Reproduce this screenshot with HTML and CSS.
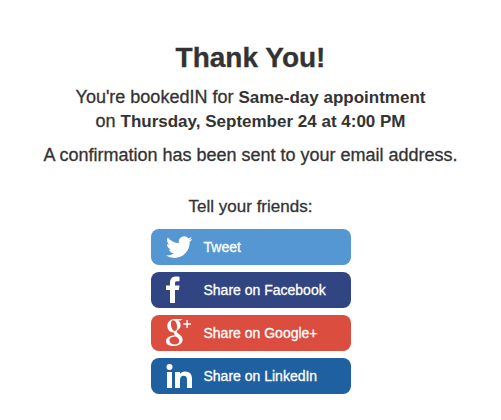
FILE: index.html
```html
<!DOCTYPE html>
<html lang="en">
<head>
    <meta charset="utf-8">
    <meta name="viewport" content="width=device-width, initial-scale=1">
    <title>Thank You!</title>
    <link rel="stylesheet" href="styles.css">
</head>
<body>
    <main class="confirmation">
        <h1>Thank You!</h1>
        <p>You're bookedIN for <strong>Same-day appointment</strong><br>
        on <strong>Thursday, September 24 at 4:00 PM</strong></p>
        <p>A confirmation has been sent to your email address.</p>

        <section class="share">
            <h2>Tell your friends:</h2>
            <a href="#" class="share-button twitter">
                <svg viewBox="0 0 28 28" aria-hidden="true">
                    <path transform="translate(0 1) scale(1.1)" d="M23.953 4.57a10 10 0 01-2.825.775 4.958 4.958 0 002.163-2.723c-.951.555-2.005.959-3.127 1.184a4.92 4.92 0 00-8.384 4.482C7.69 8.095 4.067 6.13 1.64 3.162a4.822 4.822 0 00-.666 2.475c0 1.71.87 3.213 2.188 4.096a4.904 4.904 0 01-2.228-.616v.06a4.923 4.923 0 003.946 4.827 4.996 4.996 0 01-2.212.085 4.936 4.936 0 004.604 3.417 9.867 9.867 0 01-6.102 2.105c-.39 0-.779-.023-1.17-.067a13.995 13.995 0 007.557 2.209c9.053 0 13.998-7.496 13.998-13.985 0-.21 0-.42-.015-.63A9.935 9.935 0 0024 4.59z"/>
                </svg>
                <span>Tweet</span>
            </a>
            <a href="#" class="share-button facebook">
                <svg viewBox="0 0 28 28" aria-hidden="true">
                    <path d="M4 27V14H0V9.500H4V7C4 2.500 6.300 0.500 10 0.500C11.700 0.500 13 0.600 13.500 0.700V5.200H11C9.300 5.200 9 6 9 7.200V9.500H13.500L12.900 14H9V27Z"/>
                </svg>
                <span>Share on Facebook</span>
            </a>
            <a href="#" class="share-button google">
                <svg viewBox="0 0 28 28" aria-hidden="true">
                    <path fill-rule="evenodd" d="M8.500 0H16.500L14.500 1.600H12C13.600 2.600 14.600 4 14.600 6.200C14.600 8.400 13.400 9.700 12 10.900C11 11.700 10.700 12.100 10.700 12.800C10.700 13.500 11.400 14.100 12.700 15.100C15.300 16.900 16.600 18.300 16.600 20.700C16.600 24.200 13 27 7.500 27C3 27 0 25.300 0 22.200C0 18.400 4.300 16.400 9 16.200C8.300 15.500 8 14.800 8.200 13.400C4.200 13.700 1.300 11 1.300 7C1.300 3 4.700 0 8.500 0ZM7.500 1.300C5.600 1.300 4.600 3.100 5 6C5.400 9.500 7 12 8.800 11.900C10.600 11.800 11.400 9.700 11 6.900C10.500 3.600 9.200 1.300 7.500 1.300ZM9.700 17.600C6 17.600 3.400 19 3.400 21.600C3.400 24 5.400 25.400 8.500 25.400C11.600 25.400 13.200 24.100 13.200 21.900C13.200 20 12.200 19.300 9.700 17.600Z"/>
                    <path d="M20.400 1H21.800V4.200H25V5.800H21.800V9H20.400V5.800H17.200V4.200H20.400Z"/>
                </svg>
                <span>Share on Google+</span>
            </a>
            <a href="#" class="share-button linkedin">
                <svg viewBox="0 0 28 28" aria-hidden="true">
                    <circle cx="3.500" cy="5" r="3"/>
                    <path d="M1 10H6V26H1ZM9 10H14V12C15 10.400 16.700 9.500 19 9.500C24 9.500 26 12.400 26 17V26H21V18C21 15 20 13.800 17.700 13.800C15.300 13.800 14 15.400 14 18V26H9Z"/>
                </svg>
                <span>Share on LinkedIn</span>
            </a>
        </section>
    </main>
</body>
</html>
```
FILE: styles.css
```css
body {
    margin: 0;
    background: #fff;
    color: #333;
    font-family: "Liberation Sans", Arial, sans-serif;
    font-size: 18px;
    line-height: 24px;
    text-align: center;
    -webkit-text-stroke: 0.3px;
}
.confirmation {
    padding: 40px 16px 24px;
}
h1 {
    margin: 0 0 9px;
    font-size: 28px;
    line-height: 36px;
}
p {
    margin: 0 0 10px;
}
strong {
    font-size: 17px;
    line-height: 1;
    -webkit-text-stroke: 0;
}
.share {
    display: flex;
    flex-direction: column;
    align-items: center;
    gap: 7px;
    margin-top: 28px;
}
h2 {
    margin: 0 0 3px;
    font-size: 17px;
    font-weight: normal;
    line-height: 24px;
}
.share-button {
    display: flex;
    align-items: center;
    gap: 10px;
    box-sizing: border-box;
    width: 200px;
    padding: 4px 15px;
    border-radius: 8px;
    color: #fff;
    font-size: 14px;
    text-decoration: none;
}
.share-button svg {
    width: 28px;
    height: 28px;
    fill: #fff;
}
.twitter {
    background: #5497d3;
}
.facebook {
    background: #314582;
}
.google {
    background: #db4d3f;
}
.linkedin {
    background: #1f60a0;
}
```
